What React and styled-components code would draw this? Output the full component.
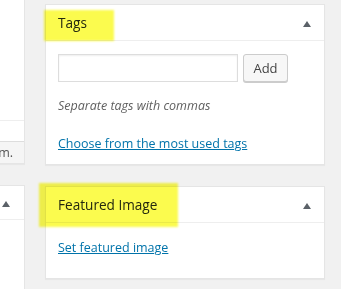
import React from "react";
import styled, { createGlobalStyle } from "styled-components";

const Global = createGlobalStyle`
  html, body { margin: 0; padding: 0; background: #f1f1f1; }
  body { font-family: "Open Sans", "Noto Sans", sans-serif; font-size: 12.5px; color: #444; overflow: hidden; }
`;

const Page = styled.div`
  display: flex;
  align-items: flex-start;
  gap: 20px;
  padding-top: 4px;
  width: 341px;
  height: 289px;
  box-sizing: border-box;
`;

const LeftColumn = styled.div`
  width: 25px;
  flex: 0 0 25px;
  overflow: hidden;
  margin-top: -5px;
  height: 290px;
`;

const LeftInner = styled.div`
  width: 280px;
  margin-left: -255px;
  display: flex;
  flex-direction: column;
  gap: 21px;
`;

const RightColumn = styled.div`
  width: 280px;
  flex: 0 0 280px;
  display: flex;
  flex-direction: column;
  gap: 21px;
`;

const Panel = styled.section`
  position: relative;
  background: #fff;
  border: 1px solid #e5e5e5;
  border-top-width: ${(p) => (p.$cut ? 0 : 1)}px;
  box-shadow: 0 1px 1px rgba(0, 0, 0, 0.04);
  box-sizing: border-box;
  height: ${(p) => (p.$height ? `${p.$height}px` : "auto")};
`;

const Header = styled.div`
  display: flex;
  align-items: center;
  justify-content: space-between;
  height: 35px;
  padding: 0 13px 0 12px;
  border-bottom: 1px solid #eee;
`;

const Title = styled.h2`
  margin: 0;
  font-size: 13.6px;
  font-weight: 400;
  color: #23282d;
  line-height: 1.4;
`;

const Toggle = styled.svg`
  width: 8px;
  height: 6px;
  display: block;
  margin-top: 2px;
`;

const Inside = styled.div`
  padding: 0 12px ${(p) => p.$bottom || 12}px;
`;

const TagRow = styled.div`
  display: flex;
  gap: 5px;
  margin-top: 13px;
`;

const TagInput = styled.input`
  width: 180px;
  height: 28px;
  box-sizing: border-box;
  border: 1px solid #ddd;
  box-shadow: inset 0 1px 2px rgba(0, 0, 0, 0.07);
  margin: 0;
  padding: 3px 5px;
  font: inherit;
  outline: none;
`;

const Button = styled.button`
  height: 28px;
  width: 45px;
  padding: 0 0 1px;
  font-family: inherit;
  font-size: 13px;
  color: #444;
  background: #f7f7f7;
  border: 1px solid #ccc;
  border-radius: 3px;
  box-shadow: 0 1px 0 #ccc;
  margin: 0;
  line-height: 26px;
`;

const Description = styled.p`
  margin: 15px 0 0;
  font-style: italic;
  color: #5f5f5f;
  line-height: 18px;
`;

const LinkLine = styled.p`
  margin: ${(p) => p.$top || 20}px 0 0;
  line-height: 18px;
`;

const Link = styled.a`
  color: #0073aa;
  text-decoration: underline;
`;

const Highlight = styled.div`
  position: absolute;
  left: ${(p) => p.$x}px;
  top: ${(p) => p.$y}px;
  width: ${(p) => p.$w}px;
  height: ${(p) => p.$h}px;
  background: #fbfb4e;
  mix-blend-mode: multiply;
  filter: blur(0.8px);
  pointer-events: none;
`;

const Section = styled.div`
  height: ${(p) => p.$h}px;
  border-bottom: ${(p) => (p.$line ? "1px solid #eee" : "none")};
`;

const Footer = styled.div`
  background: #f5f5f5;
  border-top: 1px solid #ddd;
  height: 21px;
  display: flex;
  align-items: center;
  justify-content: flex-end;
  padding-right: 11px;
  color: #555;
  white-space: nowrap;
`;

const LeftHeader = styled.div`
  display: flex;
  align-items: center;
  justify-content: flex-end;
  height: 33px;
  padding-right: 14px;
  border-bottom: 1px solid #eee;
`;

const Arrow = () => (
  <Toggle viewBox="0 0 8 6">
    <polygon points="4,0 8,6 0,6" fill="#5b6168" />
  </Toggle>
);

export default function App() {
  return (
    <>
      <Global />
      <Page>
        <LeftColumn>
          <LeftInner>
            <Panel $cut>
              <Section $h={121} $line />
              <Section $h={20} />
              <Footer>Apply to all items in this form.</Footer>
            </Panel>
            <Panel $height={120}>
              <LeftHeader>
                <Arrow />
              </LeftHeader>
            </Panel>
          </LeftInner>
        </LeftColumn>
        <RightColumn>
          <Panel>
            <Header>
              <Title>Tags</Title>
              <Arrow />
            </Header>
            <Inside $bottom={11}>
              <TagRow>
                <TagInput type="text" aria-label="Add New Tag" />
                <Button>Add</Button>
              </TagRow>
              <Description>Separate tags with commas</Description>
              <LinkLine>
                <Link href="#">Choose from the most used tags</Link>
              </LinkLine>
            </Inside>
            <Highlight $x={-2} $y={5} $w={70} $h={31} />
          </Panel>
          <Panel>
            <Header>
              <Title>Featured Image</Title>
              <Arrow />
            </Header>
            <Inside $bottom={21}>
              <LinkLine $top={16}>
                <Link href="#">Set featured image</Link>
              </LinkLine>
            </Inside>
            <Highlight $x={-7} $y={-4} $w={139} $h={44} />
          </Panel>
        </RightColumn>
      </Page>
    </>
  );
}
